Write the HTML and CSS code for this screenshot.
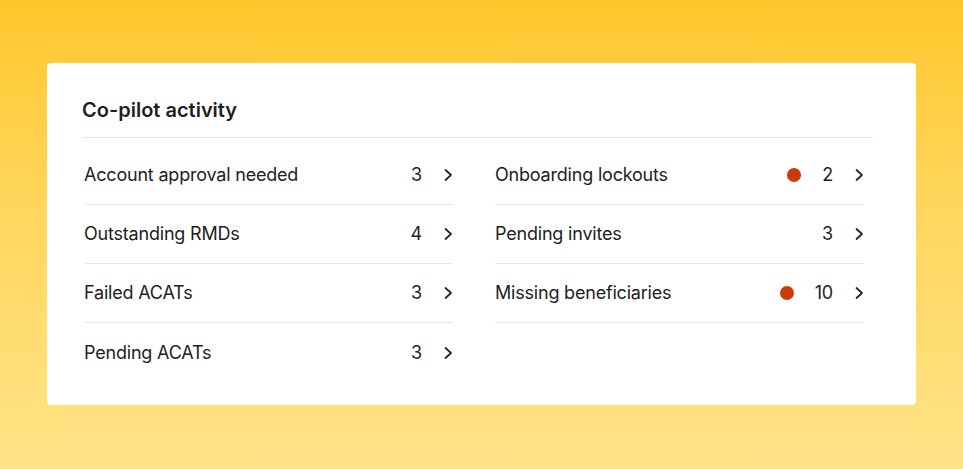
FILE: index.html
```html
<!DOCTYPE html>
<html lang="en">
<head>
<meta charset="utf-8">
<title>Co-pilot activity</title>
<link rel="stylesheet" href="styles.css">
</head>
<body>
<section class="card">
  <h2 class="card-title">Co-pilot activity</h2>
  <div class="cols">
    <ul class="col">
      <li class="row"><span class="label">Account approval needed</span><span class="meta"><span class="num">3</span><svg class="chev" viewBox="0 0 10 14"><polyline points="2.5,2 8,7 2.5,12"/></svg></span></li>
      <li class="row"><span class="label">Outstanding RMDs</span><span class="meta"><span class="num">4</span><svg class="chev" viewBox="0 0 10 14"><polyline points="2.5,2 8,7 2.5,12"/></svg></span></li>
      <li class="row"><span class="label">Failed ACATs</span><span class="meta"><span class="num">3</span><svg class="chev" viewBox="0 0 10 14"><polyline points="2.5,2 8,7 2.5,12"/></svg></span></li>
      <li class="row"><span class="label">Pending ACATs</span><span class="meta"><span class="num">3</span><svg class="chev" viewBox="0 0 10 14"><polyline points="2.5,2 8,7 2.5,12"/></svg></span></li>
    </ul>
    <ul class="col">
      <li class="row"><span class="label">Onboarding lockouts</span><span class="meta"><span class="dot"></span><span class="num">2</span><svg class="chev" viewBox="0 0 10 14"><polyline points="2.5,2 8,7 2.5,12"/></svg></span></li>
      <li class="row"><span class="label">Pending invites</span><span class="meta"><span class="num">3</span><svg class="chev" viewBox="0 0 10 14"><polyline points="2.5,2 8,7 2.5,12"/></svg></span></li>
      <li class="row"><span class="label">Missing beneficiaries</span><span class="meta"><span class="dot"></span><span class="num">10</span><svg class="chev" viewBox="0 0 10 14"><polyline points="2.5,2 8,7 2.5,12"/></svg></span></li>
    </ul>
  </div>
</section>
</body>
</html>
```

FILE: styles.css
```css
* { box-sizing: border-box; }
html, body { height: 100%; }
body {
  margin: 0;
  padding: 63px 47px 0 47px;
  background: linear-gradient(180deg, #ffc72b 0%, #ffd75e 45%, #ffe387 100%);
  font-family: Inter, "Open Sans", Arial, sans-serif;
  color: #222222;
}
.card {
  background: #ffffff;
  border-radius: 4px;
  height: 342px;
  padding: 34px 43px 0 35px;
}
.card-title {
  margin: 0;
  font-size: 20px;
  line-height: 26px;
  font-weight: 600;
  color: #1f1f1f;
  padding-bottom: 14px;
  border-bottom: 1px solid #e8e8e8;
}
.cols {
  display: grid;
  grid-template-columns: 1fr 1fr;
  column-gap: 42px;
  padding: 8px 9px 0 2px;
}
.col {
  list-style: none;
  margin: 0;
  padding: 0;
}
.row {
  display: flex;
  align-items: center;
  justify-content: space-between;
  height: 59px;
  border-bottom: 1px solid #e8e8e8;
  font-size: 18px;
  line-height: 22px;
  letter-spacing: -0.2px;
}
.col:first-child .row:last-child { border-bottom: none; }
.meta {
  display: flex;
  align-items: center;
}
.num { color: #222222; }
.dot {
  width: 14px;
  height: 14px;
  border-radius: 50%;
  background: #c83c0b;
  margin-right: 21px;
}
.chev {
  width: 10px;
  height: 14px;
  margin-left: 21px;
  margin-right: 0;
  fill: none;
  stroke: #222222;
  stroke-width: 1.7;
  stroke-linecap: round;
  stroke-linejoin: round;
}
```
